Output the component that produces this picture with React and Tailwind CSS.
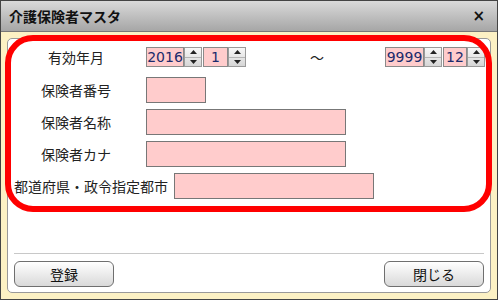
const jp = { fontFamily: '"Noto Sans CJK JP", "Noto Sans", sans-serif' }
const num = { fontFamily: '"DejaVu Sans", "Liberation Sans", sans-serif' }

function Spinner() {
  return (
    <div className="flex h-[20px] w-[18px] flex-col border border-[#9a9a9a] bg-gradient-to-b from-[#f8f8f8] to-[#d6d6d6]">
      <div className="flex flex-1 items-center justify-center border-b border-[#b5b5b5]">
        <svg width="7" height="4" viewBox="0 0 7 4"><path d="M0 4 L3.5 0 L7 4 Z" fill="#222" /></svg>
      </div>
      <div className="flex flex-1 items-center justify-center">
        <svg width="7" height="4" viewBox="0 0 7 4"><path d="M0 0 L3.5 4 L7 0 Z" fill="#222" /></svg>
      </div>
    </div>
  )
}

function NumBox({ value, width }) {
  return (
    <div
      style={num}
      className={`flex h-[20px] ${width} items-center justify-center border border-[#8a8a8a] bg-[#ffcccc] text-[14px] leading-none text-[#1b2a6b]`}
    >
      {value}
    </div>
  )
}

function Label({ children }) {
  return (
    <div style={jp} className="mr-[6px] w-[128px] text-center text-[14px] leading-none text-[#222]">
      {children}
    </div>
  )
}

function Field({ width }) {
  return <div className={`h-[26px] ${width} border border-[#777] bg-[#ffcccc]`} />
}

export default function App() {
  return (
    <div className="relative flex h-[300px] w-[498px] flex-col border border-[#444] bg-[#fcf1c4]">
      <div className="flex h-[31px] items-center justify-between border-b border-[#777] bg-gradient-to-b from-[#dadada] to-[#a6a6a6] pl-[8px] pr-[12px]">
        <span style={jp} className="text-[14px] font-bold text-[#111]">介護保険者マスタ</span>
        <span style={num} className="text-[15px] font-bold leading-none text-[#111]">×</span>
      </div>

      <div className="flex flex-1 flex-col px-[6px] pb-[6px] pt-[6px]">
        <div className="flex flex-1 flex-col rounded-[5px] border border-[#999] bg-white">
          <div className="flex flex-1 flex-col pl-[4px] pt-[8px]">
            <div className="flex h-[20px] items-center">
              <Label>有効年月</Label>
              <NumBox value="2016" width="w-[38px]" />
              <Spinner />
              <div className="w-[1px]" />
              <NumBox value="1" width="w-[25px]" />
              <Spinner />
              <span style={jp} className="ml-[64px] text-[14px] text-[#222]">～</span>
              <div className="ml-[61px] flex items-center">
                <NumBox value="9999" width="w-[39px]" />
                <Spinner />
                <div className="w-[1px]" />
                <NumBox value="12" width="w-[24px]" />
                <Spinner />
              </div>
            </div>

            <div className="mt-[10px] flex items-center">
              <Label>保険者番号</Label>
              <Field width="w-[60px]" />
            </div>
            <div className="mt-[6px] flex items-center">
              <Label>保険者名称</Label>
              <Field width="w-[200px]" />
            </div>
            <div className="mt-[6px] flex items-center">
              <Label>保険者カナ</Label>
              <Field width="w-[200px]" />
            </div>
            <div className="mt-[6px] flex items-center">
              <div style={jp} className="ml-[2px] mr-[6px] whitespace-nowrap text-[14px] leading-none text-[#222]">
                都道府県・政令指定都市
              </div>
              <Field width="w-[200px]" />
            </div>
          </div>

          <div className="mx-[6px] border-t border-[#c8c8c8]" />
          <div className="flex justify-between px-[6px] pb-[5px] pt-[7px]">
            <button
              style={jp}
              className="h-[26px] w-[100px] rounded-[6px] border border-[#6f6f6f] bg-gradient-to-b from-white to-[#d9d9d9] text-[14px] text-[#111]"
            >
              登録
            </button>
            <button
              style={jp}
              className="h-[26px] w-[100px] rounded-[6px] border border-[#6f6f6f] bg-gradient-to-b from-white to-[#d9d9d9] text-[14px] text-[#111]"
            >
              閉じる
            </button>
          </div>
        </div>
      </div>

      <div className="pointer-events-none absolute left-[4px] top-[34px] h-[177px] w-[487px] rounded-[28px] border-[6px] border-[#ff0000]" />
    </div>
  )
}
